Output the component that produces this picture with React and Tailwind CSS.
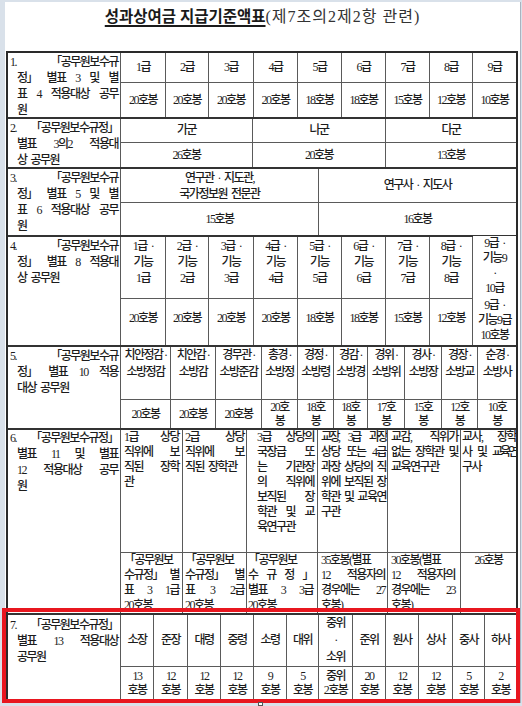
import React from 'react';

// one justified line: words spread to both edges
const J = ({ t, cls = '' }) => (
  <div className={`flex justify-between whitespace-nowrap ${cls}`}>
    {t.split(' ').map((w, i) => (
      <span key={i}>{w}</span>
    ))}
  </div>
);

const Label = ({ lines, cls = 'pt-px' }) => (
  <div className={`row-span-2 bg-white pr-[2px] leading-[16px] ${cls}`}>
    {lines.map((l, i) => {
      const pad = i === 0 ? 'pl-[2px]' : 'pl-[9px]';
      return i < lines.length - 1 ? (
        <J key={i} t={l} cls={pad} />
      ) : (
        <div key={i} className={pad}>{l}</div>
      );
    })}
  </div>
);

const C = ({ lines, top = false, cls = 'leading-[15px]' }) => (
  <div
    className={
      top
        ? `bg-white flex flex-col items-center justify-start text-center whitespace-nowrap ${cls}`
        : `bg-white flex flex-col items-center justify-center text-center whitespace-nowrap ${cls}`
    }
  >
    {[].concat(lines).map((l, i) => (
      <div key={i}>{l}</div>
    ))}
  </div>
);

// text block cell (row 6): justified lines, last line left
const T = ({ lines, cls = 'px-[3px]' }) => (
  <div className={`bg-white overflow-hidden leading-[15px] ${cls}`}>
    {lines.map((l, i) => {
      const [t, c] = [].concat(l);
      return i < lines.length - 1 ? (
        <J key={i} t={t} cls={c || ''} />
      ) : (
        <div key={i} className={`whitespace-nowrap ${c || ''}`}>{t}</div>
      );
    })}
  </div>
);

const grades = ['1급', '2급', '3급', '4급', '5급', '6급', '7급', '8급', '9급'];
const vals = ['20호봉', '20호봉', '20호봉', '20호봉', '18호봉', '18호봉', '15호봉', '12호봉', '10호봉'];

const police = [
  ['치안정감 ·', '소방정감'],
  ['치안감 ·', '소방감'],
  ['경무관 ·', '소방준감'],
  ['총경 ·', '소방정'],
  ['경정 ·', '소방령'],
  ['경감 ·', '소방경'],
  ['경위 ·', '소방위'],
  ['경사 ·', '소방장'],
  ['경장 ·', '소방교'],
  ['순경 ·', '소방사'],
];
const policeVals = [['20호봉'], ['20호봉'], ['20호봉'], ['20호', '봉'], ['18호', '봉'], ['18호', '봉'], ['17호', '봉'], ['15호', '봉'], ['12호', '봉'], ['10호', '봉']];

const army = ['소장', '준장', '대령', '중령', '소령', '대위', ['중위', '·', '소위'], '준위', '원사', '상사', '중사', '하사'];
const armyVals = [['13', '호봉'], ['12', '호봉'], ['12', '호봉'], ['12', '호봉'], ['9', '호봉'], ['5', '호봉'], ['중위', '2호봉'], ['20', '호봉'], ['12', '호봉'], ['12', '호봉'], ['5', '호봉'], ['2', '호봉']];

const App = () => {
  return (
    <div className="relative w-[522px] h-[706px] overflow-hidden bg-[#d9e1ea] pl-[5px] pr-[1px] pt-[2px] pb-[3px] text-[#1c1c1c] [font-family:'Liberation_Serif','Noto_Sans_CJK_KR',serif]">
      <div className="h-full bg-white border-r border-[#a9b3bf]">
        {/* title */}
        <div className="h-[49px] flex justify-center items-baseline pt-[4px] leading-[22px]">
          <span className="font-bold text-[15.5px] text-[#1a1a1a] underline underline-offset-[3px] decoration-[1.5px]">성과상여금 지급기준액표</span>
          <span className="text-[16px] tracking-[1px] text-[#333]">(제7조의2제2항 관련)</span>
        </div>

        <div className="ml-[1px] w-[512px] border-2 border-[#2a2a2a] text-[12px] font-medium tracking-[-1.5px] [word-spacing:2.5px]">
          {/* 1 */}
          <div className="grid grid-cols-[112px_44px_42px_44px_43px_43px_43px_43px_42px_1fr] grid-rows-[29px_34px] gap-px bg-[#5a5a5a]">
            <Label lines={['1. 「공무원보수규', '정」 별표 3 및 별', '표 4 적용대상 공무', '원']} />
            {grades.map((g) => (
              <C key={g} lines={g} />
            ))}
            {vals.map((v, i) => (
              <C key={i} lines={v} />
            ))}
          </div>

          {/* 2 */}
          <div className="grid grid-cols-[112px_131px_132px_1fr] grid-rows-[23px_24px] gap-px bg-[#5a5a5a] border-t-2 border-[#333]">
            <Label lines={['2. 「공무원보수규정」', '별표 3의2 적용대', '상 공무원']} />
            <C lines="가군" />
            <C lines="나군" />
            <C lines="다군" />
            <C lines="26호봉" />
            <C lines="20호봉" />
            <C lines="13호봉" />
          </div>

          {/* 3 */}
          <div className="grid grid-cols-[112px_197px_1fr] grid-rows-[33px_32px] gap-px bg-[#5a5a5a] border-t-2 border-[#333]">
            <Label lines={['3. 「공무원보수규', '정」 별표 5 및 별', '표 6 적용대상 공무', '원']} />
            <C lines={['연구관 · 지도관,', '국가정보원 전문관']} cls="leading-[16px]" />
            <C lines="연구사 · 지도사" />
            <C lines="15호봉" />
            <C lines="16호봉" />
          </div>

          {/* 4 */}
          <div className="grid grid-cols-[112px_44px_42px_44px_43px_43px_43px_43px_42px_1fr] grid-rows-[61px_46px] gap-px bg-[#5a5a5a] border-t-2 border-[#333]">
            <Label lines={['4. 「공무원보수규', '정」 별표 8 적용대', '상 공무원']} />
            {[1, 2, 3, 4, 5, 6, 7, 8].map((n) => (
              <C key={n} top lines={[`${n}급 ·`, '기능', `${n}급`]} cls="leading-[16px] pt-px" />
            ))}
            <C top lines={['9급 ·', '기능9', '·', '10급']} cls="leading-[15px] -mt-[1px]" />
            {vals.slice(0, 8).map((v, i) => (
              <C key={i} lines={v} cls="leading-[15px] pb-[8px]" />
            ))}
            <C top lines={['9급 ·', '기능9급', '10호봉']} cls="leading-[15px] -mt-[1px] overflow-hidden" />
          </div>

          {/* 5 */}
          <div className="grid grid-cols-[112px_49px_44px_45px_35px_35px_33px_36px_36px_35px_1fr] grid-rows-[52px_28px] gap-px bg-[#5a5a5a] border-t-2 border-[#333]">
            <Label lines={['5. 「공무원보수규', '정」 별표 10 적용', '대상 공무원']} />
            {police.map((p, i) => (
              <C key={i} top lines={p} cls="leading-[17px] pt-0 [word-spacing:0px]" />
            ))}
            {policeVals.map((p, i) => (
              <C key={i} lines={p} cls="leading-[14px]" />
            ))}
          </div>

          {/* 6 */}
          <div className="grid grid-cols-[112px_61px_63px_70px_69px_72px_1fr] grid-rows-[122px_60px] gap-px bg-[#5a5a5a] border-t-2 border-[#333]">
            <Label cls="pt-0" lines={['6. 「공무원보수규정」', '별표 11 및 별표', '12 적용대상 공무', '원']} />
            <T lines={['1급 상당', '직위에 보', '직된 장학', '관']} />
            <T lines={['2급 상당', '직위에 보', '직된 장학관']} cls="px-[2px]" />
            <T lines={['3급 상당의', '국장급 또', '는 기관장', '의 직위에', '보직된 장', '학관 및 교', '육연구관']} cls="pl-[10px] pr-[3px]" />
            <T lines={[['교장, 3급 과장', 'tracking-[-2.5px]'], '상당 또는 4급', '과장 상당의 직', '위에 보직된 장', '학관 및 교육연', '구관']} cls="pl-[3px] pr-px" />
            <T lines={['교감, 직위가', '없는 장학관 및', '교육연구관']} cls="pl-[3px] pr-[2px]" />
            <T lines={['교사, 장학', ['사 및 교육연', 'tracking-[-3px]'], '구사']} cls="pl-px pr-0" />
            <T lines={['「공무원보', '수규정」 별', '표 3 1급', '20호봉']} />
            <T lines={['「공무원보', '수규정」 별', '표 3 2급', '20호봉']} cls="px-[2px]" />
            <T lines={['「공무원보', '수 규 정 」', '별표 3 3급', '20호봉']} cls="pl-px pr-[4px]" />
            <T lines={['35호봉(별표', '12 적용자의', '경우에는 27', '호봉)']} cls="pl-[3px] pr-[2px]" />
            <T lines={['30호봉(별표', '12 적용자의', '경우에는 23', '호봉)']} cls="pl-[3px] pr-[5px]" />
            <C top lines="26호봉" cls="leading-[15px]" />
          </div>

          {/* 7 */}
          <div className="grid grid-cols-[112px_32px_33px_32px_32px_32px_31px_33px_32px_32px_33px_31px_1fr] grid-rows-[51px_32px] gap-px bg-[#5a5a5a] border-t-2 border-[#333]">
            <Label cls="pt-[2px]" lines={['7. 「공무원보수규정」', '별표 13 적용대상', '공무원']} />
            {army.map((a, i) => (
              <C key={i} lines={a} cls="leading-[17px]" />
            ))}
            {armyVals.map((a, i) => (
              <C key={i} lines={a} cls="leading-[14px]" />
            ))}
          </div>
        </div>
      </div>

      {/* highlight frame over item 7 */}
      <div className="absolute left-[2px] top-[608px] w-[518px] h-[95px] border-[4px] border-[#e8161f]" />
      <div className="absolute left-[258px] top-[702px] w-[5px] h-[4px] border border-[#555] bg-white" />
    </div>
  );
};

export default App;
